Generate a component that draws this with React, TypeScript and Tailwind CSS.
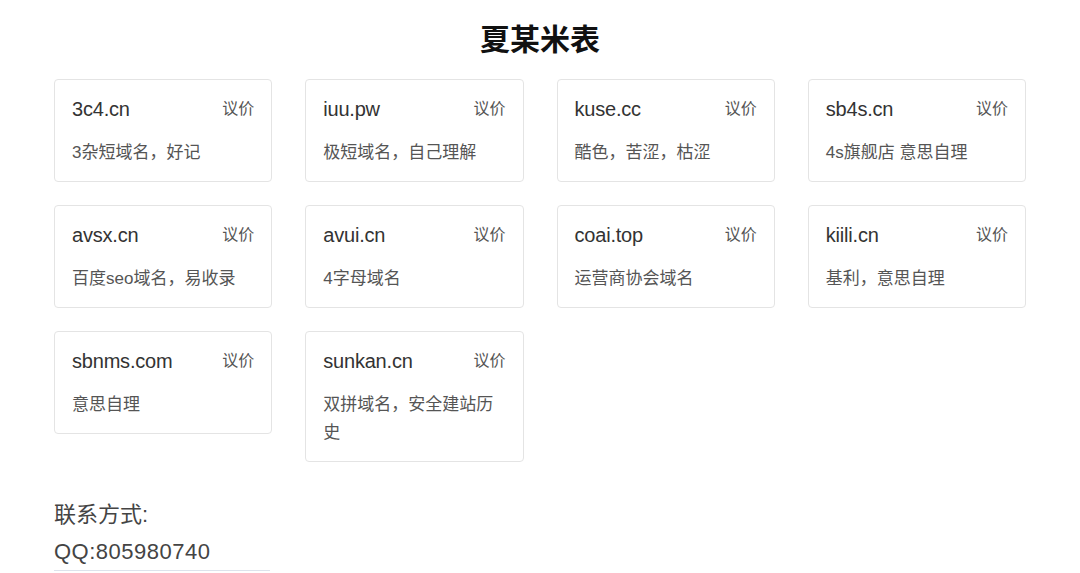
import React from "react";

type Domain = { name: string; price: string; note: string };

const domains: Domain[] = [
  { name: "3c4.cn", price: "议价", note: "3杂短域名，好记" },
  { name: "iuu.pw", price: "议价", note: "极短域名，自己理解" },
  { name: "kuse.cc", price: "议价", note: "酷色，苦涩，枯涩" },
  { name: "sb4s.cn", price: "议价", note: "4s旗舰店 意思自理" },
  { name: "avsx.cn", price: "议价", note: "百度seo域名，易收录" },
  { name: "avui.cn", price: "议价", note: "4字母域名" },
  { name: "coai.top", price: "议价", note: "运营商协会域名" },
  { name: "kiili.cn", price: "议价", note: "基利，意思自理" },
  { name: "sbnms.com", price: "议价", note: "意思自理" },
  { name: "sunkan.cn", price: "议价", note: "双拼域名，安全建站历史" },
];

function DomainCard({ d }: { d: Domain }) {
  return (
    <div className="rounded-[4px] border border-[#e4e4e4] bg-white px-[17px] pt-[17px] pb-[14px]">
      <div className="flex items-center justify-between">
        <span className="text-[20px] leading-[24px] tracking-[-0.2px] text-[#333]">{d.name}</span>
        <span className="text-[16px] leading-[24px] text-[#555]">{d.price}</span>
      </div>
      <p className="mt-[18px] text-[17px] leading-[28px] text-[#555]">{d.note}</p>
    </div>
  );
}

export default function App() {
  return (
    <div
      className="min-h-screen bg-white"
      style={{ fontFamily: '"Liberation Sans", "Noto Sans CJK SC", sans-serif' }}
    >
      <div className="mx-auto w-[972px]">
        <h1 className="flex h-[79px] items-center justify-center text-[30px] font-bold text-[#111]">
          夏某米表
        </h1>
        <div className="grid grid-cols-4 items-start gap-x-[33px] gap-y-[23px]">
          {domains.map((d) => (
            <DomainCard key={d.name} d={d} />
          ))}
        </div>
        <div className="mt-[34px] text-[22px] leading-[37px] text-[#444]">
          <div>联系方式:</div>
          <div className="w-[216px] border-b border-[#dde3ec] tracking-[0.5px]">QQ:805980740</div>
        </div>
      </div>
    </div>
  );
}
